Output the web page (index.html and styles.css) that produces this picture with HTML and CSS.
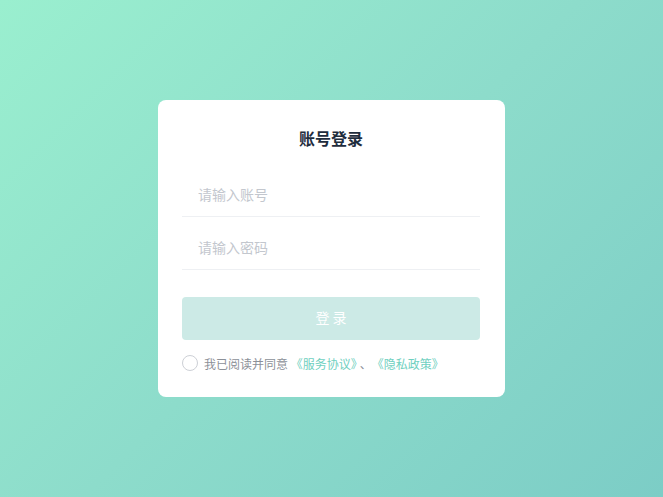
FILE: index.html
```html
<!DOCTYPE html>
<html lang="zh-CN">
<head>
<meta charset="utf-8">
<title>账号登录</title>
<link rel="stylesheet" href="styles.css">
</head>
<body>
<main class="page">
  <section class="card">
    <h1 class="title">账号登录</h1>
    <div class="field"><input class="input" type="text" placeholder="请输入账号"></div>
    <div class="field"><input class="input" type="password" placeholder="请输入密码"></div>
    <button class="btn" type="button">登 录</button>
    <div class="agree">
      <span class="radio"></span>
      <span class="agree-text">我已阅读并同意 <a class="link">《服务协议》</a><span class="sep">、</span><a class="link">《隐私政策》</a></span>
    </div>
  </section>
</main>
</body>
</html>
```
FILE: styles.css
```css
* { box-sizing: border-box; }
html, body { margin: 0; padding: 0; height: 100%; }
body {
  font-family: "Noto Sans CJK SC", "Noto Sans", sans-serif;
  background: linear-gradient(135deg, #9aefcf 0%, #8ddccb 50%, #7ccdc6 100%);
}
.page {
  height: 100%;
  display: flex;
  justify-content: center;
  padding-top: 100px;
}
.card {
  width: 347px;
  height: 297px;
  background: #fff;
  border-radius: 8px;
  padding: 25px 25px 0 24px;
  display: flex;
  flex-direction: column;
}
.title {
  margin: 0;
  font-size: 16px;
  font-weight: 700;
  line-height: 26px;
  text-align: center;
  color: #1f2d3d;
}
.field {
  margin-top: 8px;
  border-bottom: 1px solid #eef0f3;
}
.field:first-of-type { margin-top: 21px; }
.input {
  display: block;
  width: 100%;
  height: 44px;
  border: 0;
  outline: 0;
  padding: 0 16px;
  font-family: inherit;
  font-size: 14px;
  color: #333;
  background: transparent;
}
.input::placeholder { color: #c3c7ce; }
.btn {
  margin-top: 27px;
  height: 43px;
  border: 0;
  border-radius: 4px;
  background: #cceae6;
  color: #fff;
  font-family: inherit;
  font-size: 14px;
  padding: 0 0 3px;
}
.agree {
  margin-top: 13px;
  display: flex;
  align-items: center;
  gap: 6px;
  height: 20px;
}
.radio {
  width: 16px;
  height: 16px;
  border-radius: 50%;
  border: 1.5px solid #cdd0d6;
  flex: none;
}
.agree-text {
  font-size: 12px;
  color: #8c9098;
  white-space: nowrap;
}
.sep { margin: 0 6px 0 3px; }
.link { color: #6fd0c0; }
```
